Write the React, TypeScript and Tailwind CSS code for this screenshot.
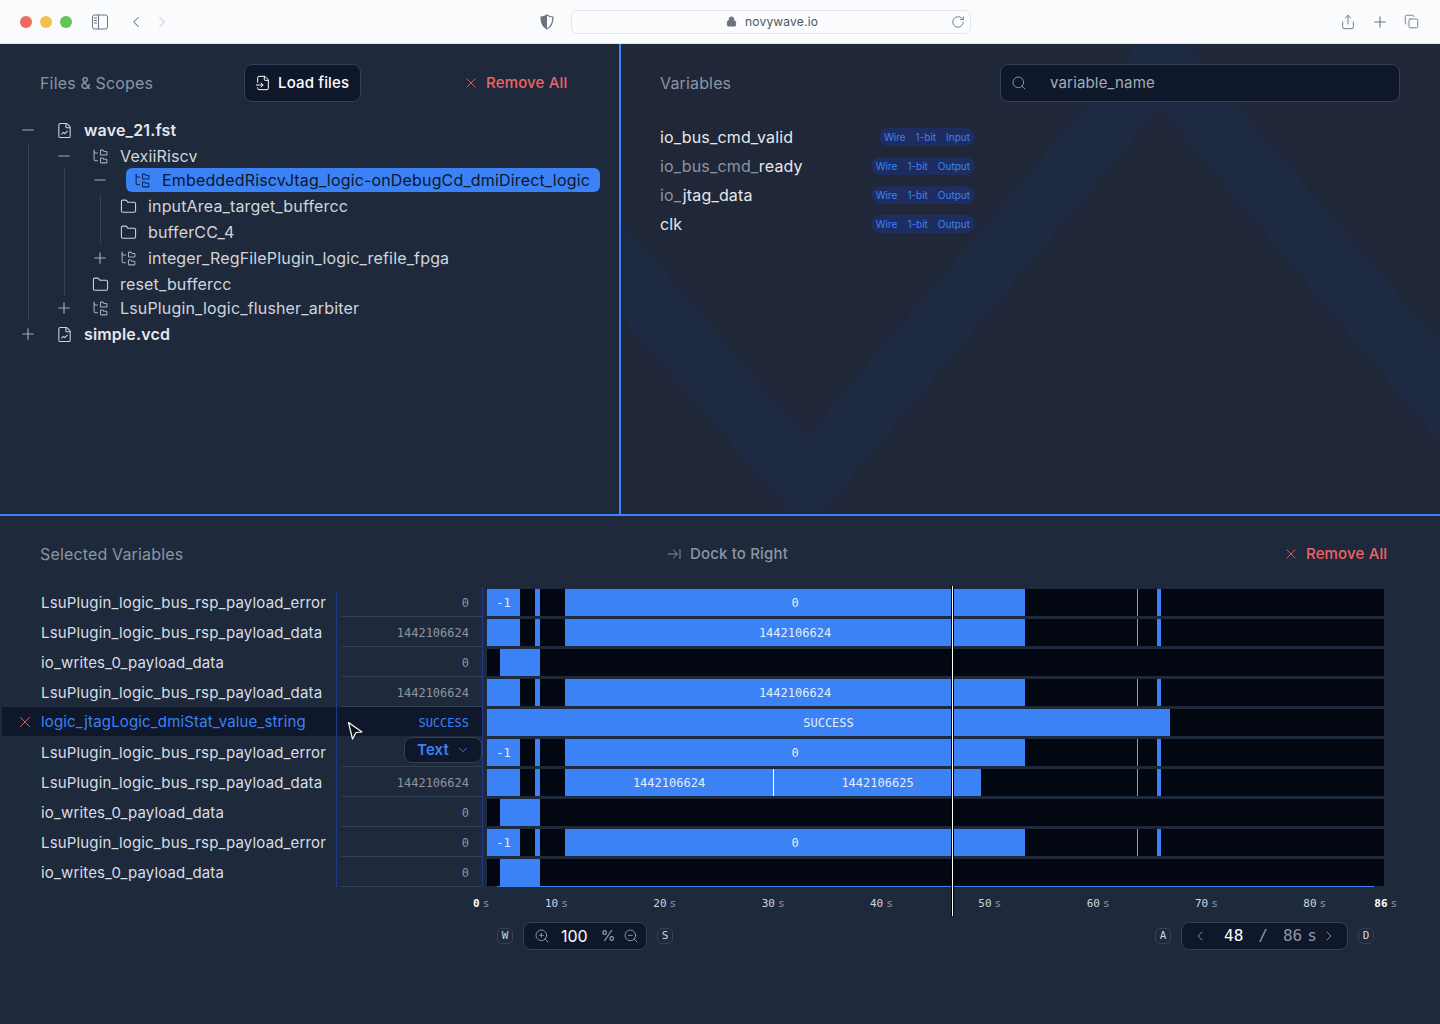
import React from 'react';
import {
  ArrowRightToLine, ChevronDown, ChevronLeft, ChevronRight, Copy, FileChartLine, FileInput, Folder, FolderTree,
  Lock, Minus, Plus, RotateCw, Search, Share, X, ZoomIn, ZoomOut,
} from 'lucide-react';

const mono = "font-['DejaVu_Sans_Mono',monospace] tracking-normal";

type Seg = { to: number; on?: boolean; label?: string; thin?: boolean; mark?: boolean };

const WAVE_START = 487;

const base = (middle: Seg[]): Seg[] => [
  { to: 520, on: true },
  { to: 535 },
  { to: 540, on: true },
  { to: 565 },
  ...middle,
  { to: 1137 },
  { to: 1138, thin: true },
  { to: 1157 },
  { to: 1161, on: true },
  { to: 1384 },
];

const withLabel = (label: string): Seg[] => base([{ to: 1025, on: true, label }]);
const withError: Seg[] = [{ to: 520, on: true, label: '-1' }, ...withLabel('0').slice(1)];
const pulse: Seg[] = [{ to: 500 }, { to: 540, on: true }, { to: 1384 }];
const split: Seg[] = base([
  { to: 773, on: true, label: '1442106624' },
  { to: 774, mark: true },
  { to: 981, on: true, label: '1442106625' },
]);

const rows = [
  { name: 'LsuPlugin_logic_bus_rsp_payload_error', value: '0', wave: withError },
  { name: 'LsuPlugin_logic_bus_rsp_payload_data', value: '1442106624', wave: withLabel('1442106624') },
  { name: 'io_writes_0_payload_data', value: '0', wave: pulse },
  { name: 'LsuPlugin_logic_bus_rsp_payload_data', value: '1442106624', wave: withLabel('1442106624') },
  {
    name: 'logic_jtagLogic_dmiStat_value_string',
    value: 'SUCCESS',
    selected: true,
    wave: [{ to: 1170, on: true, label: 'SUCCESS' }, { to: 1384 }] as Seg[],
  },
  { name: 'LsuPlugin_logic_bus_rsp_payload_error', value: '', dropdown: true, wave: withError },
  { name: 'LsuPlugin_logic_bus_rsp_payload_data', value: '1442106624', wave: split },
  { name: 'io_writes_0_payload_data', value: '0', wave: pulse },
  { name: 'LsuPlugin_logic_bus_rsp_payload_error', value: '0', wave: withError },
  { name: 'io_writes_0_payload_data', value: '0', wave: pulse },
];

const variables = [
  { dim: '', bright: 'io_bus_cmd_valid', dir: 'Input' },
  { dim: 'io_bus_cmd_', bright: 'ready', dir: 'Output' },
  { dim: 'io_', bright: 'jtag_data', dir: 'Output' },
  { dim: '', bright: 'clk', dir: 'Output' },
];

const ticks = ['10', '20', '30', '40', '50', '60', '70'];

const Toggle = ({ open }: { open?: boolean }) => (
  <span className="flex w-4 h-4 shrink-0 items-center justify-center text-[#a3adba]">
    {open ? (
      <Minus size={18} strokeWidth={1.5} className="shrink-0" />
    ) : (
      <Plus size={18} strokeWidth={1.5} className="shrink-0" />
    )}
  </span>
);

const TreeRow = ({ icon, label, bold }: { icon: React.ReactNode; label: string; bold?: boolean }) => (
  <>
    <span className="flex w-4 h-4 shrink-0 items-center justify-center text-[#cbd5e1]">{icon}</span>
    <span className={bold ? 'ml-3 text-[#e5e7eb] font-semibold' : 'ml-3 text-[#d1d5db]'}>{label}</span>
  </>
);

const fileIcon = <FileChartLine size={17} strokeWidth={1.5} className="shrink-0" />;
const scopeIcon = <FolderTree size={17} strokeWidth={1.5} className="shrink-0 text-[#a3adba]" />;
const folderIcon = <Folder size={17} strokeWidth={1.5} className="shrink-0" />;

const FilesPanel = () => (
  <div className="w-[619px] shrink-0 h-full pt-5">
    <div className="flex items-center h-[38px] pl-10">
      <span className="w-[204px] text-[#8b95a5] text-base">Files &amp; Scopes</span>
      <button className="flex items-center gap-[7px] w-[117px] h-[38px] pl-[10px] bg-[#0f172a] border border-[#334155] rounded-lg text-white text-[15px] font-medium">
        <FileInput size={16} strokeWidth={1.5} />
        Load files
      </button>
      <button className="flex items-center ml-[102px] gap-[7px] text-[#ef6464] text-[15px] font-medium">
        <X size={16} strokeWidth={1.3} />
        Remove All
      </button>
    </div>

    <div className="mt-4 flex flex-col gap-[2px] text-base leading-6">
      <div className="flex items-center h-6 pl-5">
        <Toggle open />
        <span className="w-5" />
        <TreeRow icon={fileIcon} label="wave_21.fst" bold />
      </div>
      <div className="ml-7 border-l border-[#334155] pl-[27px] flex flex-col">
        <div className="flex items-center h-6">
          <Toggle open />
          <span className="w-5" />
          <TreeRow icon={scopeIcon} label="VexiiRiscv" />
        </div>
        <div className="ml-2 border-l border-[#334155] pl-[27px] flex flex-col gap-[2px]">
          <div className="flex items-center h-6">
            <Toggle open />
            <div className="flex items-center ml-[18px] w-[474px] h-6 pl-2 bg-[#3b82f6] rounded-md">
              <FolderTree size={17} strokeWidth={1.5} className="shrink-0 text-[#10254f]" />
              <span className="ml-[11px] text-[#0f172a]">EmbeddedRiscvJtag_logic-onDebugCd_dmiDirect_logic</span>
            </div>
          </div>
          <div className="ml-2 border-l border-[#334155] pl-[19px] flex flex-col gap-[2px]">
            <div className="flex items-center h-6">
              <TreeRow icon={folderIcon} label="inputArea_target_buffercc" />
            </div>
            <div className="flex items-center h-6">
              <TreeRow icon={folderIcon} label="bufferCC_4" />
            </div>
          </div>
          <div className="flex items-center h-6">
            <Toggle />
            <span className="w-3" />
            <TreeRow icon={scopeIcon} label="integer_RegFilePlugin_logic_refile_fpga" />
          </div>
          <div className="flex items-center h-6">
            <TreeRow icon={folderIcon} label="reset_buffercc" />
          </div>
        </div>
        <div className="flex items-center h-6">
          <Toggle />
          <span className="w-5" />
          <TreeRow icon={scopeIcon} label="LsuPlugin_logic_flusher_arbiter" />
        </div>
      </div>
      <div className="flex items-center h-6 pl-5">
        <Toggle />
        <span className="w-5" />
        <TreeRow icon={fileIcon} label="simple.vcd" bold />
      </div>
    </div>
  </div>
);

const VariablesPanel = () => (
  <div className="relative flex-1 h-full overflow-hidden border-l-2 border-[#3b82f6] bg-[#1f2738] pt-5">
    {/* logo watermark */}
    <svg className="absolute left-0 top-0" width="819" height="470" viewBox="621 44 819 470">
      <polygon
        points="621,220 806,437 1138,44 1185,44 1440,343 1440,443 1160,108 821,514 792,514 621,317"
        fill="#1e2a41"
      />
    </svg>

    <div className="relative flex items-center h-[38px] pl-[39px]">
      <span className="w-[340px] text-[#8b95a5] text-base">Variables</span>
      <div className="flex items-center w-[400px] h-[38px] pl-[10px] bg-[#0f172a] border border-[#334155] rounded-lg">
        <Search size={16} strokeWidth={1.3} className="text-[#94a3b8]" />
        <span className="ml-[23px] text-[15px] text-[#a3adba]">variable_name</span>
      </div>
    </div>

    <div className="relative mt-[23px] ml-[39px] w-[315px] flex flex-col gap-[5px]">
      {variables.map((v) => (
        <div key={v.bright} className="flex items-center justify-between h-6 text-base">
          <span>
            <span className="text-[#8b95a5]">{v.dim}</span>
            <span className="text-[#e5e7eb]">{v.bright}</span>
          </span>
          <span className="flex items-center gap-[10px] h-[18px] px-[5px] rounded-full bg-[#1e2d5f] text-[#3b82f6] text-[10px] tracking-normal">
            <span>Wire</span>
            <span>1-bit</span>
            <span>{v.dir}</span>
          </span>
        </div>
      ))}
    </div>
  </div>
);

const WaveRow = ({ wave }: { wave: Seg[] }) => {
  let prev = WAVE_START;
  return (
    <div className={`flex h-[27px] mt-[2px] mb-px w-[897px] bg-[#030712] text-[#e5edf8] text-xs ${mono}`}>
      {wave.map((s, i) => {
        const width = s.to - prev;
        prev = s.to;
        const bg = s.mark ? 'bg-white' : s.thin ? 'bg-[#7f9ccf]' : s.on ? 'bg-[#3b82f6]' : '';
        return (
          <div key={i} style={{ width }} className={`flex items-center justify-center shrink-0 ${bg}`}>
            {s.label}
          </div>
        );
      })}
    </div>
  );
};

const Keycap = ({ label }: { label: string }) => (
  <span className={`flex w-4 h-4 shrink-0 items-center justify-center rounded-[5px] border border-[#334155] text-[#cbd5e1] text-[11px] ${mono}`}>
    {label}
  </span>
);

const Time = ({ n, bold }: { n: string; bold?: boolean }) => (
  <>
    {bold ? <b className="text-white">{n}</b> : n}
    <span className="ml-[3px] text-[#8b95a5]">s</span>
  </>
);

const SelectedPanel = () => (
  <div className="relative flex-1">
    <div className="flex items-center h-[38px] mt-[19px] pl-10">
      <span className="w-[626px] text-[#8b95a5] text-base">Selected Variables</span>
      <span className="flex items-center gap-2 text-[#8b95a5] text-[15px] font-medium">
        <ArrowRightToLine size={16} strokeWidth={1.4} />
        Dock to Right
      </span>
      <span className="flex items-center ml-[495px] gap-[7px] text-[#ef6464] text-[15px] font-medium">
        <X size={16} strokeWidth={1.3} />
        Remove All
      </span>
    </div>

    <div className="relative mt-[14px]">
      {rows.map((r, i) => (
        <div key={i} className="flex h-[30px]">
          <div className={r.selected ? 'flex items-center w-[480px] ml-[2px] h-[29px] bg-[#0f172a]' : 'flex w-[482px] h-[30px]'}>
            <div className={r.selected ? 'flex items-center w-[334px] shrink-0 pl-[14px] pt-px gap-[7px] text-[#3b82f6]' : 'flex items-center w-[336px] shrink-0 pl-[41px] pt-[3px] text-[#d9dee5]'}>
              {r.selected && <X size={18} strokeWidth={1.2} className="text-[#ef6464]" />}
              <span className="text-[15px]">{r.name}</span>
            </div>
            <div className={i === 0 ? 'w-px mt-1 shrink-0 self-stretch bg-[#1e3a8a]' : 'w-px shrink-0 self-stretch bg-[#1e3a8a]'} />
            <div className={`flex ml-1 w-[141px] justify-end ${r.selected ? 'items-center' : 'border-b border-[#334155]'}`}>
              {r.dropdown ? (
                <div className="flex items-center w-[78px] h-[26px] pl-3 gap-[7px] bg-[#0f172a] border border-[#334155] rounded-lg text-[#3b82f6] text-[15px] font-semibold">
                  Text
                  <ChevronDown size={14} strokeWidth={1.5} />
                </div>
              ) : (
                <span className={`self-center pr-[13px] text-xs ${mono} ${r.selected ? 'pt-[2px] text-[#3b82f6]' : 'pt-[3px] text-[#8b95a5]'}`}>
                  {r.value}
                </span>
              )}
            </div>
          </div>
          <div className="w-px shrink-0 bg-[#1e3a8a]" />
          <div className="ml-1">
            <WaveRow wave={r.wave} />
          </div>
        </div>
      ))}

      {/* bottom edge of the timeline */}
      <div className="absolute left-[497px] top-[299px] w-[877px] h-px bg-[#3b82f6]" />
      {/* time cursor */}
      <div className="absolute left-[951px] -top-px w-[3px] h-[330px] bg-black flex justify-center">
        <div className="w-px h-full bg-white" />
      </div>
      {/* mouse pointer */}
      <svg className="absolute left-[347px] top-[134px]" width="17" height="20" viewBox="0 0 17 20">
        <path d="M1.5 1.5 L15 11 L9 11.5 L5.5 18 Z" fill="#0b0f19" stroke="#fff" strokeWidth="1.2" strokeLinejoin="round" />
      </svg>
    </div>

    <div className={`flex h-4 mt-[9px] ml-[473px] items-center text-[11px] text-[#cbd5e1] ${mono}`}>
      <span className="w-[72px] shrink-0"><Time n="0" bold /></span>
      {ticks.map((t) => (
        <span key={t} className="w-[108.33px] shrink-0"><Time n={t} /></span>
      ))}
      <span className="w-[71px] shrink-0"><Time n="80" /></span>
      <span className="shrink-0"><Time n="86" bold /></span>
    </div>

    <div className="flex items-center h-7 mt-[10px] ml-[497px]">
      <Keycap label="W" />
      <div className="flex items-center w-[124px] h-7 ml-[10px] pl-[10px] bg-[#0f172a] border border-[#334155] rounded-lg text-[#94a3b8]">
        <ZoomIn size={16} strokeWidth={1.3} />
        <span className="ml-[11px] text-base text-white tracking-normal">100</span>
        <span className="ml-[13px] text-[15px]">%</span>
        <ZoomOut size={16} strokeWidth={1.3} className="ml-[7px]" />
      </div>
      <span className="ml-[10px]"><Keycap label="S" /></span>

      <span className="ml-[482px]"><Keycap label="A" /></span>
      <div className={`flex items-center w-[167px] h-7 ml-[10px] pl-[10px] bg-[#0f172a] border border-[#334155] rounded-lg text-[#8b95a5] text-base ${mono}`}>
        <ChevronLeft size={16} strokeWidth={1.4} />
        <span className="ml-4 text-white">48</span>
        <span className="ml-[15px]">/</span>
        <span className="ml-[15px]">86</span>
        <span className="ml-[5px]">s</span>
        <ChevronRight size={16} strokeWidth={1.4} className="ml-1" />
      </div>
      <span className="ml-[10px]"><Keycap label="D" /></span>
    </div>
  </div>
);

const SidebarIcon = () => (
  <svg width="16" height="16" viewBox="0 0 16 16" fill="none" stroke="#6b7280" strokeWidth="1" className="ml-5 shrink-0">
    <rect x="0.5" y="1" width="15" height="14" rx="2" />
    <path d="M6.5 1v14" />
    <path d="M2 4h3M2 6.5h3M2 9h3" />
  </svg>
);

const ShieldIcon = () => (
  <svg width="14" height="16" viewBox="0 0 14 16" fill="none" className="ml-[369px] shrink-0">
    <path d="M7 1 C5 2.4 3 3 1 3 C1 8.5 2.5 12.5 7 15 C11.5 12.5 13 8.5 13 3 C11 3 9 2.4 7 1 Z" stroke="#6b7280" strokeWidth="1.2" />
    <path d="M7 1 C5 2.4 3 3 1 3 C1 8.5 2.5 12.5 7 15 Z" fill="#6b7280" />
  </svg>
);

const BrowserBar = () => (
  <div className="flex items-center h-11 shrink-0 pl-5 bg-[#fafbfd] border-b border-[#e2e5ea] text-[#6b7280]">
    <span className="w-3 h-3 rounded-full bg-[#ed6a5e]" />
    <span className="w-3 h-3 ml-2 rounded-full bg-[#f5bf4f]" />
    <span className="w-3 h-3 ml-2 rounded-full bg-[#61c554]" />
    <SidebarIcon />
    <ChevronLeft size={18} strokeWidth={1.4} className="ml-[19px]" />
    <ChevronRight size={18} strokeWidth={1.4} className="ml-2 text-[#c4c8ce]" />
    <ShieldIcon />
    <div className="flex items-center w-[400px] h-6 ml-[17px] pl-[154px] bg-[#fbfcfd] border border-[#e5e7eb] rounded-md">
      <Lock size={11} strokeWidth={2} className="fill-[#6b7280]" />
      <span className="ml-2 text-xs tracking-[0.2px] text-[#4b5563]">novywave.io</span>
      <RotateCw size={14} strokeWidth={1.5} className="ml-[133px]" />
    </div>
    <Share size={16} strokeWidth={1.4} className="ml-[369px]" />
    <Plus size={18} strokeWidth={1.4} className="ml-[15px]" />
    <Copy size={15} strokeWidth={1.4} className="ml-[15px]" />
  </div>
);

export default function App() {
  return (
    <div className="flex flex-col w-[1440px] h-[1024px] overflow-hidden bg-[#1e293b] tracking-[0.16px] font-['Inter','Noto_Sans',sans-serif]">
      <BrowserBar />
      <div className="flex h-[472px] shrink-0 border-b-2 border-[#3b82f6]">
        <FilesPanel />
        <VariablesPanel />
      </div>
      <SelectedPanel />
    </div>
  );
}
